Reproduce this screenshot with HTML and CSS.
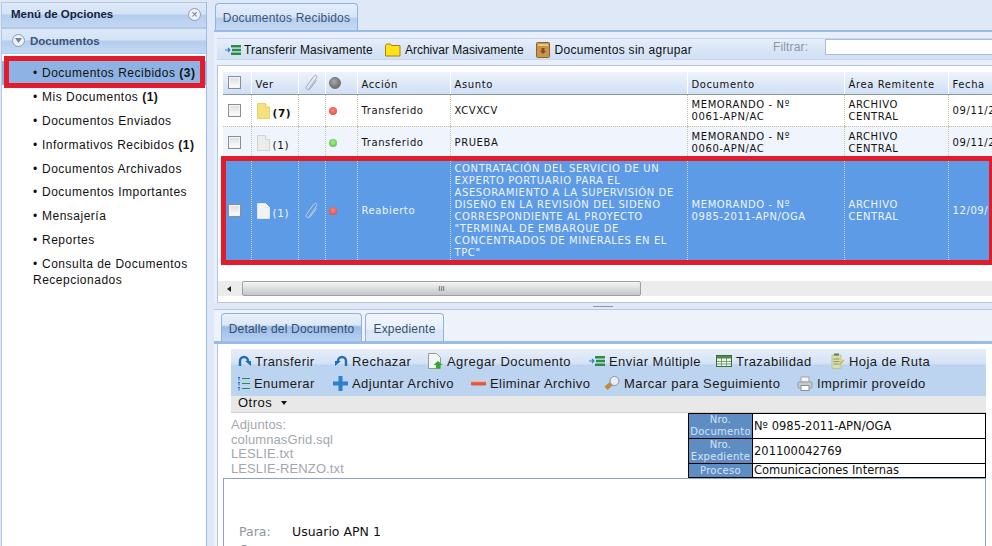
FILE: index.html
```html
<!DOCTYPE html>
<html lang="es">
<head>
    <meta charset="UTF-8">
    <title>Documentos Recibidos</title>
    <link rel="stylesheet" href="styles.css">
</head>
<body>
    <aside class="sidebar">
        <div class="side-head">
            <span>Menú de Opciones</span>
            <span class="round-btn">×</span>
        </div>
        <div class="side-group">
            <span class="round-btn">
                <svg width="7" height="5" viewBox="0 0 7 5"><path d="M0 0h7L3.500 5z" fill="#6d86a8"/></svg>
            </span>
            <span>Documentos</span>
        </div>
        <ul class="side-list">
            <li class="active">Documentos Recibidos <b>(3)</b></li>
            <li>Mis Documentos <b>(1)</b></li>
            <li>Documentos Enviados</li>
            <li>Informativos Recibidos <b>(1)</b></li>
            <li>Documentos Archivados</li>
            <li>Documentos Importantes</li>
            <li>Mensajería</li>
            <li>Reportes</li>
            <li class="two-line">Consulta de Documentos Recepcionados</li>
        </ul>
    </aside>

    <main class="main">
        <div class="tabs top-tabs">
            <div class="tab">Documentos Recibidos</div>
        </div>
        <section class="upper">
            <div class="toolbar">
                <span class="tool t-first">
                    <svg width="16" height="14" viewBox="0 0 16 14"><path d="M0 7h4M3 5l2 2-2 2" stroke="#2b7fc4" stroke-width="1.200" fill="none"/><path d="M6 2h10v2.500H6zM7 5.700h9v2.600H7zM6 9.500h10V12H6z" fill="#2e8b45"/></svg>
                    Transferir Masivamente
                </span>
                <span class="tool t-mid">
                    <svg width="16" height="14" viewBox="0 0 16 14"><path d="M.5 2.500l1-1.500h4l1 1.500h8.500v10.500H.5z" fill="#ffe11a" stroke="#a8860e"/></svg>
                    Archivar Masivamente
                </span>
                <span class="tool t-last">
                    <svg width="14" height="16" viewBox="0 0 14 16"><rect x=".5" y=".5" width="13" height="15" rx="1" fill="#c9954c" stroke="#8a6428"/><rect x="2" y="2" width="10" height="2" fill="#e7c487"/><path d="M5.500 6h3v3H10l-3 3-3-3h1.500z" fill="#8c4a1c"/></svg>
                    Documentos sin agrupar
                </span>
                <span class="filter-label">Filtrar:</span>
                <input class="filter-input" type="text">
            </div>
            <div class="grid-wrap">
                <table class="grid">
                    <colgroup>
                        <col class="c-check"><col class="c-ver"><col class="c-clip"><col class="c-dot">
                        <col class="c-accion"><col class="c-asunto"><col class="c-doc"><col class="c-area"><col class="c-fecha">
                    </colgroup>
                    <thead>
                        <tr>
                            <th><span class="check"></span></th>
                            <th>Ver</th>
                            <th class="mid"><svg class="clip" width="14" height="17" viewBox="0 0 14 17"><path d="M3.500 15.500L11.500 4c1.300-2-1-3.800-2.500-2L1.500 12.500c-1.300 2.200.8 4 2.600 3 .8-.4 1.300-1 1.700-1.600L11.500 6.500" fill="none" stroke="#a3a9b0"/></svg></th>
                            <th class="dot-cell"><span class="gray-dot"></span></th>
                            <th>Acción</th>
                            <th>Asunto</th>
                            <th>Documento</th>
                            <th>Área Remitente</th>
                            <th>Fecha</th>
                        </tr>
                    </thead>
                    <tbody>
                        <tr class="row-a">
                            <td><span class="check"></span></td>
                            <td>
                                <span class="ver">
                                    <svg width="13" height="16" viewBox="0 0 13 16"><path d="M.5.500h8l4 4v11H.5z" fill="#f5e07e" stroke="#e6d070"/><path d="M8.500.500v4h4" fill="#fff3b5" stroke="#e6d070"/></svg>
                                    <b>(7)</b>
                                </span>
                            </td>
                            <td></td>
                            <td class="dot-cell"><span class="dot red"></span></td>
                            <td>Transferido</td>
                            <td>XCVXCV</td>
                            <td>MEMORANDO - Nº<br>0061-APN/AC</td>
                            <td>ARCHIVO<br>CENTRAL</td>
                            <td>09/11/2011</td>
                        </tr>
                        <tr class="row-b">
                            <td><span class="check"></span></td>
                            <td>
                                <span class="ver">
                                    <svg width="13" height="16" viewBox="0 0 13 16"><path d="M.5.500h8l4 4v11H.5z" fill="#ececec" stroke="#d2d2d2"/><path d="M8.500.500v4h4" fill="#fafafa" stroke="#d2d2d2"/></svg>
                                    (1)
                                </span>
                            </td>
                            <td></td>
                            <td class="dot-cell"><span class="dot green"></span></td>
                            <td>Transferido</td>
                            <td>PRUEBA</td>
                            <td>MEMORANDO - Nº<br>0060-APN/AC</td>
                            <td>ARCHIVO<br>CENTRAL</td>
                            <td>09/11/2011</td>
                        </tr>
                        <tr class="row-sel">
                            <td><span class="check"></span></td>
                            <td>
                                <span class="ver">
                                    <svg width="13" height="16" viewBox="0 0 13 16"><path d="M.5.500h8l4 4v11H.5z" fill="#f2f2f2" stroke="#dfe6ef"/><path d="M8.500.500v4h4" fill="#fff" stroke="#dfe6ef"/></svg>
                                    (1)
                                </span>
                            </td>
                            <td class="mid"><svg class="clip" width="14" height="17" viewBox="0 0 14 17"><path d="M3.500 15.500L11.500 4c1.300-2-1-3.800-2.500-2L1.500 12.500c-1.300 2.200.8 4 2.600 3 .8-.4 1.300-1 1.700-1.600L11.500 6.500" fill="none" stroke="#c5cfdb"/></svg></td>
                            <td class="dot-cell"><span class="dot red"></span></td>
                            <td>Reabierto</td>
                            <td class="asunto">CONTRATACIÓN DEL SERVICIO DE UN EXPERTO PORTUARIO PARA EL ASESORAMIENTO A LA SUPERVISIÓN DE DISEÑO EN LA REVISIÓN DEL SIDEÑO CORRESPONDIENTE AL PROYECTO "TERMINAL DE EMBARQUE DE CONCENTRADOS DE MINERALES EN EL TPC"</td>
                            <td>MEMORANDO - Nº<br>0985-2011-APN/OGA</td>
                            <td>ARCHIVO<br>CENTRAL</td>
                            <td>12/09/2011</td>
                        </tr>
                    </tbody>
                </table>
                <div class="hscroll">
                    <span class="arrow"></span>
                    <div class="thumb">III</div>
                </div>
            </div>
        </section>
        <div class="splitter"><span></span></div>
        <section class="lower">
            <div class="tabs lower-tabs">
                <div class="tab">Detalle del Documento</div>
                <div class="tab tab-off">Expediente</div>
            </div>
            <div class="detail">
                <div class="actions">
                    <div class="action-row">
                        <span class="act w-transferir">
                            <svg width="13" height="13" viewBox="0 0 13 13"><path d="M2 11V6a4 4 0 0 1 8 0v1" fill="none" stroke="#1f6fb5" stroke-width="2.400"/><path d="M7 6h6v5z" fill="#1f6fb5"/></svg>
                            Transferir
                        </span>
                        <span class="act w-rechazar">
                            <svg width="13" height="13" viewBox="0 0 13 13"><path d="M11 11V6a4 4 0 0 0-8 0v1" fill="none" stroke="#1f6fb5" stroke-width="2.400"/><path d="M6 6H0v5z" fill="#1f6fb5"/></svg>
                            Rechazar
                        </span>
                        <span class="act w-agregar">
                            <svg width="15" height="16" viewBox="0 0 15 16"><path d="M.5.500h8l4 4v11H.5z" fill="#f4f4f4" stroke="#9a9a9a"/><path d="M10 8l4.500 4H12v3.500H8V12H5.500z" fill="#31a72c"/></svg>
                            Agregar Documento
                        </span>
                        <span class="act w-enviar">
                            <svg width="16" height="14" viewBox="0 0 16 14"><path d="M0 7h4M3 5l2 2-2 2" stroke="#2b7fc4" stroke-width="1.200" fill="none"/><path d="M6 2h10v2.500H6zM7 5.700h9v2.600H7zM6 9.500h10V12H6z" fill="#2e8b45"/></svg>
                            Enviar Múltiple
                        </span>
                        <span class="act w-traza">
                            <svg width="16" height="12" viewBox="0 0 16 12"><rect x=".5" y=".5" width="15" height="11" fill="#eef6e6" stroke="#38703a"/><path d="M1 6.500h14M1 9h14M5.500 3v8M10.500 3v8" stroke="#7aa27c"/><rect x="1" y="1" width="14" height="2.500" fill="#4d8a50"/></svg>
                            Trazabilidad
                        </span>
                        <span class="act">
                            <svg width="14" height="16" viewBox="0 0 14 16"><rect x="1" y="2" width="9" height="13.500" fill="#d9deb0" stroke="#a9b486" stroke-width=".6"/><path d="M3 .500h5v2H3z" fill="#5f8040"/><path d="M2.500 6h6M2.500 8.500h6M2.500 11h5" stroke="#8a9a5f"/><path d="M8 11l4.500-4.500 1 1L9 12l-1.500.500z" fill="#f0a920"/></svg>
                            Hoja de Ruta
                        </span>
                    </div>
                    <div class="action-row">
                        <span class="act w-enumerar">
                            <svg width="12" height="15" viewBox="0 0 12 15"><path d="M4 2.500h8M4 7.500h8M4 12.500h8" stroke="#2e8b55" stroke-width="1.200"/><path d="M1 1v3.500M1 6v3.500M1 11v3.500" stroke="#2f6fc4" stroke-width="2" stroke-dasharray="1 .6"/></svg>
                            Enumerar
                        </span>
                        <span class="act w-adjuntar">
                            <svg width="15" height="15" viewBox="0 0 15 15"><path d="M5.500 0h4v5.500H15v4H9.500V15h-4V9.500H0v-4h5.500z" fill="#2f7fd0"/></svg>
                            Adjuntar Archivo
                        </span>
                        <span class="act w-eliminar">
                            <svg width="15" height="5" viewBox="0 0 15 5"><rect width="15" height="4.500" rx="1" fill="#e2593a"/><rect width="15" height="1.200" fill="#f5b09b"/></svg>
                            Eliminar Archivo
                        </span>
                        <span class="act w-marcar">
                            <svg width="16" height="15" viewBox="0 0 16 15"><path d="M6 6l-5.500 4.500 3 3.500L9 9z" fill="#c08a3c"/><circle cx="10.500" cy="5" r="4.500" fill="#e9eef3" stroke="#8593a3"/><path d="M8 4a3 3 0 0 1 3-2" stroke="#fff" fill="none"/></svg>
                            Marcar para Seguimiento
                        </span>
                        <span class="act">
                            <svg width="16" height="15" viewBox="0 0 16 15"><rect x="4" y="1" width="8" height="5" fill="#f5f5f5" stroke="#a2a6ab"/><rect x="1" y="6" width="14" height="6" rx="1" fill="#c5cacf" stroke="#969ba1"/><rect x="4" y="9.500" width="8" height="5" fill="#fff" stroke="#8b8f95"/></svg>
                            Imprimir proveído
                        </span>
                    </div>
                </div>
                <div class="otros">Otros <span class="caret"></span></div>
                <div class="meta">
                    <div class="adjuntos">
                        <div>Adjuntos:</div>
                        <div>columnasGrid.sql</div>
                        <div>LESLIE.txt</div>
                        <div>LESLIE-RENZO.txt</div>
                    </div>
                    <table class="doc-info">
                        <tr><th>Nro. Documento</th><td>Nº 0985-2011-APN/OGA</td></tr>
                        <tr><th>Nro. Expediente</th><td>201100042769</td></tr>
                        <tr class="short"><th>Proceso</th><td>Comunicaciones Internas</td></tr>
                    </table>
                </div>
                <div class="editor">
                    <div class="line"><span class="lbl">Para:</span><span>Usuario APN 1</span></div>
                    <div class="line"><span class="lbl">Cc:</span></div>
                </div>
            </div>
        </section>

        <!-- marcas rojas de la captura -->
        <div class="mark mark-row"></div>
    </main>
    <div class="mark mark-menu"></div>
</body>
</html>
```

FILE: styles.css
```css
html, body {
    margin: 0;
    height: 100%;
}
body {
    position: relative;
    display: flex;
    gap: 7px;
    height: 546px;
    overflow: hidden;
    background-color: #dfe8f6;
    font-family: "Liberation Sans", Arial, sans-serif;
    color: #111;
}

/* sidebar */
.sidebar {
    width: 206px;
    flex-shrink: 0;
    margin: 2px 0 0 1px;
    display: flex;
    flex-direction: column;
    border-right: 1px solid #99bbe8;
    border-left: 1px solid #b5c9e6;
    box-sizing: border-box;
}
.side-head, .side-group {
    display: flex;
    flex-shrink: 0;
    align-items: center;
    box-sizing: border-box;
    background: linear-gradient(#dce8f8 0, #d5e3f6 45%, #b4cdee 50%, #c3d7f2 100%);
    border-top: 1px solid #b5c9e6;
    border-bottom: 1px solid #b5c9e6;
}
.side-head {
    height: 26px;
    padding: 0 5px 2px 9px;
    justify-content: space-between;
    font-size: 11.500px;
    font-weight: bold;
    color: #15233f;
}
.side-group {
    height: 26px;
    gap: 5px;
    padding: 0 10px 1px;
    font-size: 11.500px;
    font-weight: bold;
    color: #3c5578;
}
.round-btn {
    width: 11px;
    height: 11px;
    border-radius: 50%;
    border: 1px solid #8d9db3;
    background-color: #eef2f8;
    color: #66758a;
    font-size: 11px;
    font-weight: normal;
    line-height: 10px;
    text-align: center;
    display: flex;
    align-items: center;
    justify-content: center;
}
.side-list {
    flex-grow: 1;
    list-style: none;
    margin: 0;
    padding: 7px 0 0;
    background-color: #fff;
    font-size: 12px;
    line-height: 16px;
}
.side-list li {
    padding: 4px 8px 3.900px 40px;
    position: relative;
    letter-spacing: .5px;
}
.side-list li::before {
    content: "•";
    position: absolute;
    left: 31px;
}
.side-list .active {
    background-color: #8db2e3;
}
.side-list .two-line {
    padding-left: 31px;
    text-indent: 9px;
}
.side-list .two-line::before {
    text-indent: 0;
}

/* main column */
.main {
    flex-grow: 1;
    min-width: 0;
    display: flex;
    flex-direction: column;
}
.tabs {
    display: flex;
    gap: 3px;
    flex-shrink: 0;
}
.tab {
    border: 1px solid #8db2e3;
    border-bottom: none;
    border-radius: 4px 4px 0 0;
    background: linear-gradient(#e4edfa 0, #d8e5f7 50%, #b6cfef 55%, #c5d9f3 100%);
    color: #3b5577;
    font-size: 12px;
    letter-spacing: .2px;
    box-sizing: border-box;
    white-space: nowrap;
}
.top-tabs {
    height: 30px;
    padding: 3px 0 0 1px;
    box-sizing: border-box;
}
.top-tabs .tab {
    width: 143px;
    padding: 7px 0 0;
    text-align: center;
}
.upper {
    height: 273px;
    flex-shrink: 0;
    box-sizing: border-box;
    border-top: 2px solid #99bbe8;
    padding: 6px 0 0 3px;
    background-color: #e8effa;
    display: flex;
    flex-direction: column;
}
.toolbar {
    height: 22px;
    flex-shrink: 0;
    display: flex;
    align-items: center;
    gap: 12px;
    padding: 2px 0 0 8px;
    background: linear-gradient(#e6eefa, #cfdff4);
    border-top: 1px solid #c5d6ee;
    border-bottom: 1px solid #c5d6ee;
    box-sizing: border-box;
    font-size: 12px;
    letter-spacing: .15px;
    white-space: nowrap;
}
.tool {
    display: flex;
    align-items: center;
    gap: 4px;
}
.t-first {
    gap: 3px;
}
.t-mid {
    letter-spacing: 0;
}
.t-last {
    gap: 5px;
    letter-spacing: .3px;
}
.filter-label {
    margin: -7px 0 0 69px;
    color: #8b96a5;
}
.filter-input {
    flex-shrink: 0;
    width: 200px;
    height: 16px;
    padding: 0;
    margin: -6px 0 0 5px;
    border: 1px solid #a9bfd8;
    box-sizing: border-box;
    background-color: #fff;
}

/* grid */
.grid-wrap {
    margin-top: 5px;
    padding: 6px 0 0 5px;
    height: 238px;
    box-sizing: border-box;
    flex-shrink: 0;
    background-color: #fff;
    border: 1px solid #b7c6dd;
    border-right: none;
    overflow: hidden;
    display: flex;
    flex-direction: column;
}
.grid {
    table-layout: fixed;
    border-collapse: collapse;
    width: 811px;
    flex-shrink: 0;
    font-family: "DejaVu Sans", Verdana, sans-serif;
    font-size: 10px;
    line-height: 12px;
    letter-spacing: .6px;
}
.c-check { width: 28px; }
.c-ver { width: 47px; }
.c-clip { width: 27px; }
.c-dot { width: 32px; }
.c-accion { width: 93px; }
.c-asunto { width: 237px; }
.c-doc { width: 157px; }
.c-area { width: 104px; }
.c-fecha { width: 86px; }
.grid th {
    height: 22px;
    padding: 4px 3px 0 4px;
    text-align: left;
    font-weight: normal;
    background: linear-gradient(#edf3fc, #cfdff4);
    border-left: 1px solid #fff;
    border-bottom: 1px solid #8e99a8;
    box-sizing: border-box;
}
.grid td {
    padding: 2px 3px 0 4px;
    border-left: 1px dotted #c9c2a8;
    border-bottom: 1px dotted #c9c2a8;
    box-sizing: border-box;
    vertical-align: middle;
}
.grid th:first-child, .grid td:first-child {
    border-left: none;
    padding: 0 0 0 5px;
}
.grid .mid {
    text-align: center;
    padding: 0;
}
.grid .dot-cell {
    padding-left: 3px;
}
.grid th.dot-cell {
    padding-top: 0;
}
.row-a td {
    height: 32px;
    background-color: #fff;
}
.row-b td {
    height: 32px;
    background-color: #f0f4fc;
}
.row-sel td {
    height: 104px;
    background-color: #5e9be6;
    color: #eef4fc;
    border-left-color: #c6daf4;
    border-bottom: none;
}
.check {
    display: block;
    width: 11px;
    height: 11px;
    border: 1px solid #8a8f96;
    background: linear-gradient(#dcdcdc, #fff);
    box-shadow: inset 0 0 0 1px #f4f4f4;
}
.ver {
    display: flex;
    align-items: flex-end;
    gap: 3px;
    padding-left: 1px;
    font-size: 10.500px;
}
.clip {
    display: block;
    margin: 0 auto;
}
.gray-dot {
    display: block;
    width: 12px;
    height: 12px;
    border-radius: 50%;
    background: radial-gradient(circle at 40% 35%, #a9a9a9, #5c5c5c);
    border: 1px solid #777;
    box-sizing: border-box;
}
.dot {
    display: block;
    width: 8px;
    height: 8px;
    border-radius: 50%;
}
.dot.red {
    background: radial-gradient(circle at 50% 40%, #f88a80, #e23e30);
}
.dot.green {
    background: radial-gradient(circle at 50% 40%, #a4ef8c, #4cb93c);
}
.hscroll {
    margin: 19px 0 0 -5px;
    height: 15px;
    display: flex;
    align-items: center;
    background-color: #ececec;
    flex-shrink: 0;
}
.arrow {
    width: 0;
    height: 0;
    margin: 0 11px 0 9px;
    border: 3px solid transparent;
    border-left: none;
    border-right: 4px solid #222;
}
.thumb {
    width: 399px;
    height: 15px;
    border: 1px solid #9aa0a8;
    border-radius: 2px;
    box-sizing: border-box;
    background: linear-gradient(#f4f4f4, #c4c6c9);
    font-size: 8px;
    line-height: 13px;
    text-align: center;
    color: #555;
}
.splitter {
    height: 7px;
    background-color: #e0e8f8;
    border-bottom: 1px solid #b7c6dd;
    box-sizing: border-box;
    flex-shrink: 0;
    display: flex;
    justify-content: center;
    align-items: center;
}
.splitter span {
    width: 20px;
    height: 1px;
    background-color: #8d99aa;
}

/* lower panel */
.lower {
    flex-grow: 1;
    min-height: 0;
    overflow: hidden;
    background-color: #eef3fb;
}
.lower-tabs {
    height: 34px;
    padding: 3px 0 0 7px;
    box-sizing: border-box;
    border-bottom: 3px solid #99bbe8;
}
.lower-tabs .tab {
    height: 28px;
    padding: 8px 0 0;
    width: 141px;
    text-align: center;
    color: #33506f;
    background: linear-gradient(#e8f0fb 0, #dce8f8 40%, #9dbde8 48%, #b6cff0 100%);
}
.lower-tabs .tab-off {
    width: 79px;
    background: linear-gradient(#f1f5fc 0, #e8f0fb 55%, #d8e5f6 60%, #dde8f8 100%);
}
.detail {
    height: 202px;
    overflow: hidden;
    background-color: #fff;
    margin-left: 3px;
    padding: 5px 6px 0 13px;
    border-left: 1px solid #b6c5d8;
    font-family: "DejaVu Sans", Verdana, sans-serif;
    font-size: 12px;
    box-sizing: border-box;
}
.actions {
    height: 47px;
    padding: 1px 0 0 7px;
    box-sizing: border-box;
    background: linear-gradient(#e6eefa 0, #d5e3f6 30%, #bcd4f0 35%, #bcd4f0 100%);
}
.action-row {
    height: 22px;
    display: flex;
    align-items: center;
    white-space: nowrap;
}
.act {
    display: flex;
    align-items: center;
    gap: 4px;
    font-family: "Liberation Sans", Arial, sans-serif;
    font-size: 13px;
    letter-spacing: .45px;
    color: #1a1a1a;
}
.w-transferir { width: 97px; }
.w-rechazar { width: 93px; }
.w-agregar { width: 161px; }
.w-enviar { width: 127px; }
.w-traza { width: 115px; }
.w-enumerar { width: 95px; }
.w-adjuntar { width: 138px; }
.w-eliminar { width: 133px; }
.w-marcar { width: 193px; }
.otros {
    height: 17px;
    padding-left: 7px;
    background-color: #e8e8e8;
    border-bottom: 1px solid #cfcfcf;
    box-sizing: border-box;
    font-family: "Liberation Sans", Arial, sans-serif;
    font-size: 13px;
    letter-spacing: .5px;
    line-height: 13px;
}
.caret {
    display: inline-block;
    width: 0;
    height: 0;
    margin: 0 0 2px 5px;
    border: 3px solid transparent;
    border-top: 4px solid #111;
    border-bottom: none;
}
.meta {
    height: 65px;
    display: flex;
    justify-content: space-between;
}
.adjuntos {
    color: #a3a7ad;
    font-family: "Liberation Sans", Arial, sans-serif;
    font-size: 13px;
    letter-spacing: .1px;
    line-height: 14.500px;
    padding-top: 5px;
}
.doc-info {
    width: 298px;
    height: 65px;
    border-collapse: collapse;
    table-layout: fixed;
    font-size: 11.500px;
    line-height: 11px;
}
.doc-info th {
    width: 63px;
    height: 24px;
    padding: 0;
    background-color: #5e8dc4;
    color: #d5e4f6;
    font-weight: normal;
    border: 1px solid #000;
    font-size: 10px;
    line-height: 12px;
    letter-spacing: .3px;
}
.doc-info td {
    padding: 0 1px;
    border: 1px solid #000;
    white-space: nowrap;
}
.doc-info .short th {
    height: 13px;
    line-height: 11px;
}
.editor {
    margin: 0 0 0 -8px;
    height: 100px;
    border: 1px solid #8aa5bd;
    box-sizing: border-box;
    padding: 44px 0 0 15px;
    font-size: 12.500px;
    line-height: 18px;
}
.line {
    display: flex;
}
.lbl {
    width: 53px;
    color: #8f959c;
}

/* red marks from the screenshot */
.mark {
    position: absolute;
    box-sizing: border-box;
    border: 5px solid #e31c2b;
    pointer-events: none;
}
.mark-row {
    left: 221px;
    top: 156px;
    width: 773px;
    height: 109px;
}
.mark-menu {
    left: 4px;
    top: 56px;
    width: 201px;
    height: 32px;
}
```
